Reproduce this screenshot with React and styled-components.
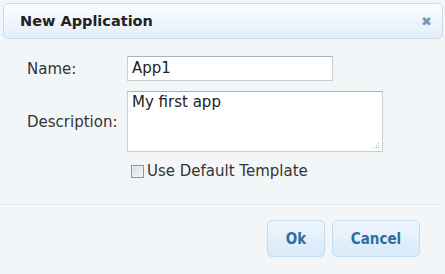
import React from "react";
import styled, { createGlobalStyle } from "styled-components";

const Global = createGlobalStyle`
  html, body { margin: 0; padding: 0; background: #f3f6f9; }
  body { font-family: "DejaVu Sans", Verdana, sans-serif; }
`;

const Dialog = styled.div`
  width: 445px;
  height: 274px;
  box-sizing: border-box;
  background: #f3f6f9;
  display: flex;
  flex-direction: column;
  padding-top: 3px;
`;

const TitleBar = styled.div`
  margin: 0 2px 0 3px;
  height: 36px;
  box-sizing: border-box;
  border: 1px solid #c5dbec;
  border-radius: 5px;
  background: linear-gradient(#fbfdff, #e3eef9);
  display: flex;
  align-items: center;
  justify-content: space-between;
  padding: 0 10px 0 16px;
`;

const Title = styled.span`
  font-size: 14.5px;
  font-weight: bold;
  color: #222;
`;

const Close = styled.span`
  font-size: 13px;
  font-weight: bold;
  color: #7a98b8;
  line-height: 1;
`;

const Form = styled.div`
  display: grid;
  grid-template-columns: 100px auto;
  row-gap: 10px;
  padding: 17px 0 0 27px;
  align-items: center;
`;

const Label = styled.label`
  font-size: 15px;
  color: #333;
`;

const Field = styled.div`
  box-sizing: border-box;
  width: ${(p) => p.$w}px;
  height: ${(p) => p.$h}px;
  background: #fff;
  border: 1px solid #c8ced4;
  border-top-color: #a9b0b8;
  padding: ${(p) => p.$pt}px 3px 0 4px;
  font-size: 15px;
  color: #222;
  position: relative;
`;

const Grip = styled.svg`
  position: absolute;
  right: 2px;
  bottom: 2px;
`;

const CheckRow = styled.div`
  grid-column: 2;
  display: flex;
  align-items: center;
  gap: 3px;
  padding-left: 4px;
  font-size: 15px;
  color: #333;
`;

const Box = styled.span`
  width: 11px;
  height: 11px;
  border: 1px solid #8e9398;
  background: linear-gradient(135deg, #d9dcdf, #f4f5f6);
  box-shadow: inset 0 0 0 1px #eef0f2;
`;

const Separator = styled.div`
  margin-top: 24px;
  height: 1px;
  background: #dde3e9;
  border-bottom: 1px solid #fbfcfd;
  margin-right: 4px;
`;

const ButtonPane = styled.div`
  display: flex;
  justify-content: flex-end;
  gap: 7px;
  padding: 14px 25px 0 0;
`;

const Button = styled.button`
  width: ${(p) => p.$w}px;
  height: 37px;
  border: 1px solid #c5dbec;
  border-radius: 5px;
  background: linear-gradient(#eef6fd, #d8e9f8);
  color: #2e6e9e;
  font-family: "DejaVu Sans Condensed", "DejaVu Sans", sans-serif;
  font-weight: bold;
  font-size: 15px;
  padding: 0;
`;

export default function App() {
  return (
    <>
      <Global />
      <Dialog>
        <TitleBar>
          <Title>New Application</Title>
          <Close>✖</Close>
        </TitleBar>
        <Form>
          <Label>Name:</Label>
          <Field $w={206} $h={25} $pt={2}>App1</Field>
          <Label>Description:</Label>
          <Field $w={256} $h={61} $pt={1}>
            My first app
            <Grip width="7" height="7" viewBox="0 0 7 7">
              <rect x="5" y="1" width="1" height="1" fill="#b8b8b8" />
              <rect x="3" y="3" width="1" height="1" fill="#b8b8b8" />
              <rect x="5" y="3" width="1" height="1" fill="#b8b8b8" />
              <rect x="1" y="5" width="1" height="1" fill="#b8b8b8" />
              <rect x="3" y="5" width="1" height="1" fill="#b8b8b8" />
              <rect x="5" y="5" width="1" height="1" fill="#b8b8b8" />
            </Grip>
          </Field>
          <CheckRow>
            <Box />
            Use Default Template
          </CheckRow>
        </Form>
        <Separator />
        <ButtonPane>
          <Button $w={58}>Ok</Button>
          <Button $w={88}>Cancel</Button>
        </ButtonPane>
      </Dialog>
    </>
  );
}
